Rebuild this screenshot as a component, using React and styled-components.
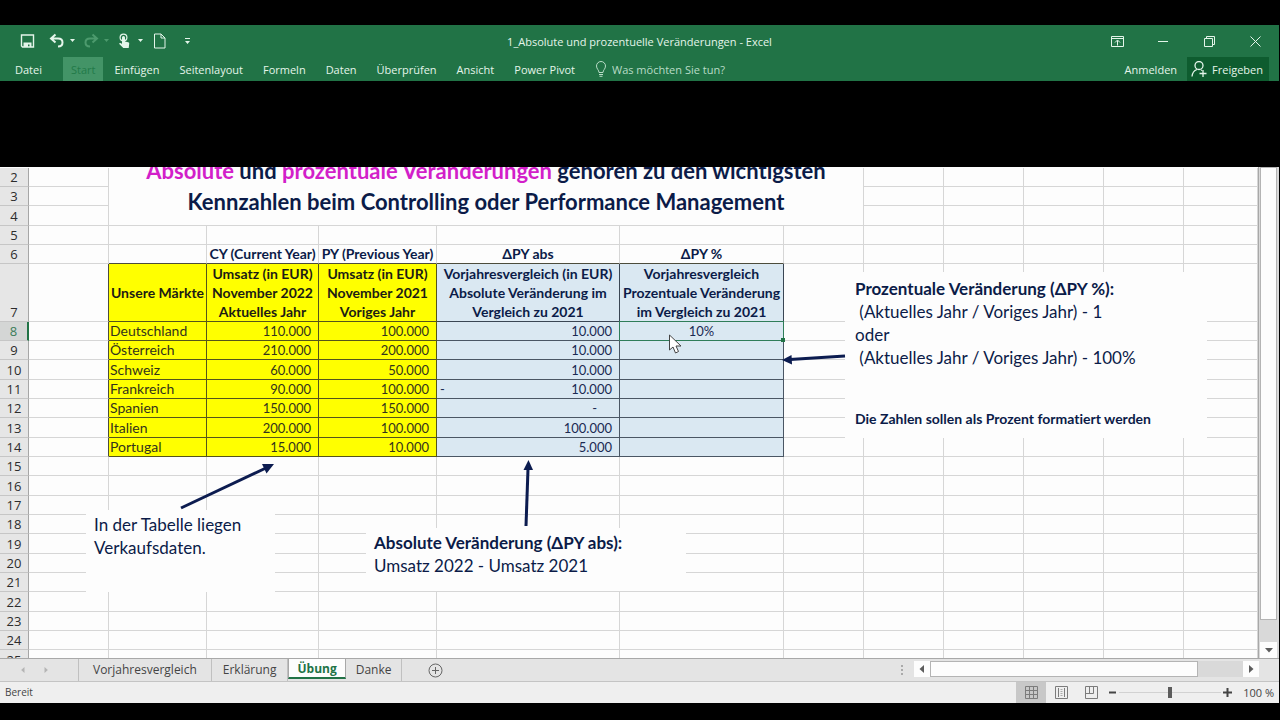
import React, { useState } from 'react';
import styled, { createGlobalStyle, css } from 'styled-components';

const GlobalStyle = createGlobalStyle`
    * {
        box-sizing: border-box;
    }
    body {
        margin: 0;
        background: #000;
        font-family: "Open Sans", "Noto Sans", sans-serif;
        font-size: 11px;
    }
    button, input {
        font: inherit;
        color: inherit;
        border: 0;
        padding: 0;
        background: none;
    }
`

const Window = styled.div`
    display: flex;
    flex-direction: column;
    height: 100vh;
    padding: 25px 1px 17px 0;
    overflow: hidden;
`

const Header = styled.header`
    background: #217346;
    color: #e4f5ea;
`

const TitleBar = styled.div`
    display: grid;
    grid-template-columns: 1fr auto 1fr;
    align-items: center;
    height: 32px;
`

const Title = styled.h1`
    margin: 0;
    font-size: 11px;
    font-weight: 400;
`

const QuickAccess = styled.div`
    display: flex;
    align-items: center;
    gap: 7px;
    padding-left: 20px;
`

const QuickButton = styled.button`
    display: flex;
    align-items: center;
    gap: 4px;
    margin-right: ${props => props.$space || 0}px;
    color: ${props => props.$dim ? '#4c9a6d' : '#e4f5ea'};

    svg {
        display: block;
    }
`

const WindowButtons = styled.div`
    display: flex;
    justify-content: flex-end;
    padding-right: 1px;
`

const WindowButton = styled.button`
    display: grid;
    place-items: center;
    width: 46px;
    height: 30px;
`

const Ribbon = styled.nav`
    display: flex;
    align-items: stretch;
    height: 24px;
    padding-right: 10px;
`

const RibbonTab = styled.button`
    padding: 0 10px;
    white-space: nowrap;
    ${props => props.$file && css`
        padding: 0 21px 0 15px;
    `}
    ${props => props.$active && css`
        padding: 0 8px;
        margin-right: 1px;
        background: #439467;
        color: #227a49;
    `}
`

const Search = styled.label`
    display: flex;
    align-items: center;
    gap: 5px;
    flex: 1;
    margin-left: 10px;
    color: #b9dcc7;

    input {
        flex: 1;
        outline: none;
    }
    input::placeholder {
        color: #b9dcc7;
        opacity: 1;
    }
`

const ShareButton = styled.button`
    display: flex;
    align-items: center;
    gap: 5px;
    padding: 0 6px 0 4px;
    background: #0e5c2f;
`

const RibbonBody = styled.div`
    flex: 0 0 86px;
    background: #000;
`

const Workspace = styled.main`
    display: flex;
    flex: 1;
    min-height: 0;
    background: #e4e4e4;
`

const Sheet = styled.div`
    position: relative;
    flex: 1;
    min-width: 0;
    padding-top: 1px;
    overflow: hidden;
    background: #fdfdfd;
    border-right: 1px solid #a8a8a8;
    font-family: Lato, Carlito, sans-serif;
    font-size: 13px;
    font-variant-ligatures: none;
    color: #0b1b48;
`

const Table = styled.table`
    table-layout: fixed;
    width: 100%;
    border-collapse: separate;
    border-spacing: 0;
`

const Col = styled.col`
    width: ${props => props.$width ? props.$width + 'px' : 'auto'};
`

const Row = styled.tr`
    height: 19px;

    &:nth-child(3n) {
        height: 20px;
    }
`

const cell = css`
    padding: 0;
    border: 0 solid #d6d6d6;
    border-width: 0 1px 1px 0;
    line-height: 18px;
    vertical-align: bottom;
    white-space: nowrap;
`

const RowNumber = styled.th`
    ${cell}
    background: ${props => props.$active ? '#d4d6d5' : '#e6e6e6'};
    border-color: #c6c6c6;
    border-right: ${props => props.$active ? '2px solid #217346' : '1px solid #a6a6a6'};
    color: ${props => props.$active ? '#3c7d5a' : '#2c2c2c'};
    font-family: "Open Sans", "Noto Sans", sans-serif;
    font-size: 13px;
    font-weight: 400;
    text-align: center;
`

const Cell = styled.td`
    ${cell}
    ${props => props.$edgeRight && css`
        border-right-color: #4c4c3c;
    `}
    ${props => props.$edgeBottom && css`
        border-bottom-color: #4c4c3c;
    `}
`

const HeadCell = styled.th`
    ${cell}
    line-height: 19px;
    vertical-align: middle;
    text-align: center;
    font-size: 14px;
    font-weight: 700;
    border-color: ${props => props.$blue ? '#3a4654' : '#55551a'};
    background: ${props => props.$blue ? '#dae8f2' : '#ffff00'};
    color: ${props => props.$blue ? '#0b1b48' : '#1c1c14'};
    white-space: pre-line;
`

const Caption = styled(Cell)`
    text-align: center;
    font-size: 14px;
    font-weight: 700;
`

const DataCell = styled(Cell)`
    position: relative;
    background: ${props => props.$blue ? '#dae8f2' : '#ffff00'};
    border-color: ${props => props.$blue ? '#4a5664' : '#55551a'};
    color: ${props => props.$blue ? '#1b2a52' : '#33331c'};
    text-align: ${props => props.$align || 'right'};
    font-size: ${props => props.$align === 'left' ? '14px' : '13px'};
    padding: ${props => props.$align === 'left' ? '0 0 0 1px' : props.$align === 'center' ? '0' : '0 7px 0 3px'};
`

const Accounting = styled.span`
    display: flex;
    justify-content: space-between;
    padding-right: ${props => props.$zero ? '15px' : '0'};
`

// green frame with fill handle round the active cell
const Selection = styled.span`
    position: absolute;
    z-index: 1;
    inset: -1px;
    border: 1px solid #2f7d59;

    &::after {
        content: '';
        position: absolute;
        right: -2px;
        bottom: -2px;
        width: 4px;
        height: 4px;
        background: #217346;
    }
`

const Banner = styled.h2`
    position: absolute;
    left: 109px;
    top: -12px;
    width: 754px;
    margin: 0;
    padding-bottom: 8px;
    background: #fdfdfd;
    font-size: 22px;
    line-height: 31px;
    font-weight: 700;
    text-align: center;

    em {
        font-style: normal;
        color: #d21fc9;
    }
`

const Note = styled.div`
    position: absolute;
    left: ${props => props.$x}px;
    top: ${props => props.$y}px;
    width: ${props => props.$width}px;
    height: ${props => props.$height}px;
    padding: ${props => props.$pad || '3px 8px'};
    background: #fdfdfd;
    font-size: 17px;
    line-height: 23px;
    white-space: pre-wrap;

    p {
        margin: 0;
    }
`

const Hint = styled.p`
    && {
        margin-top: 38px;
        font-size: 14px;
        font-weight: 700;
    }
`

const Drawing = styled.svg`
    position: absolute;
    z-index: 2;
    left: 0;
    top: 0;
    pointer-events: none;
`

const ScrollColumn = styled.div`
    display: flex;
    flex-direction: column;
    width: 20px;
    padding: 0 2px 0 1px;
    background: #d9d9d9;
`

const ScrollThumb = styled.div`
    background: #fdfdfd;
    border: 1px solid #b4b4b4;
    flex: ${props => props.$flex};
`

const ScrollTrack = styled.div`
    flex: ${props => props.$flex};
    background: #d9d9d9;
`

const ScrollButton = styled.button`
    display: grid;
    place-items: center;
    flex: 0 0 16px;
    background: #fdfdfd;
    color: #5c5c5c;
`

const SheetBar = styled.div`
    display: flex;
    flex: 0 0 24px;
    background: #e4e4e4;
    border-top: 1px solid #a8a8a8;
    border-bottom: 1px solid #c4c4c4;
    color: #444;
    font-size: 12px;
`

const SheetArrows = styled.div`
    display: flex;
    align-items: center;
    gap: 17px;
    width: 79px;
    padding-left: 20px;
    border-right: 1px solid #c0c0c0;
    color: #b4b4b4;

    button {
        display: flex;
    }
`

const SheetTab = styled.button`
    padding: 0 ${props => props.$pad}px 2px;
    border-right: 1px solid #c0c0c0;
    ${props => props.$active && css`
        padding: 0 ${props.$pad}px;
        margin-bottom: 2px;
        background: #fdfdfd;
        border: 1px solid #a8a8a8;
        border-top: 0;
        border-bottom: 2px solid #217346;
        color: #217346;
        font-weight: 700;
    `}
`

const AddSheet = styled.button`
    display: grid;
    place-items: center;
    margin-left: 26px;
`

const Grip = styled.span`
    display: grid;
    align-content: center;
    gap: 2px;
    margin: 0 11px 0 auto;

    i {
        width: 2px;
        height: 2px;
        background: #aaa;
    }
`

const ScrollRow = styled.div`
    display: flex;
    flex: 0 0 345px;
    margin: 2px 20px 4px 0;
`

const StatusBar = styled.footer`
    display: flex;
    align-items: stretch;
    flex: 0 0 21px;
    padding: 0 5px;
    background: #efefef;
    color: #444;
    font-size: 10px;
    line-height: 21px;
`

const ViewButton = styled.button`
    display: grid;
    place-items: center;
    width: 30px;
    background: ${props => props.$active ? '#c8c8c8' : 'none'};
    color: #7c7c7c;
`

const Views = styled.div`
    display: flex;
    margin-left: auto;
`

const Zoom = styled.div`
    display: flex;
    align-items: center;
    gap: 2px;
    margin-left: 2px;

    button {
        display: flex;
    }
    output {
        width: 40px;
        font-size: 11px;
        text-align: right;
        white-space: nowrap;
    }
`

const ZoomSlider = styled.input`
    appearance: none;
    width: 102px;
    height: 12px;
    margin: 0;
    background: linear-gradient(#d2d2d2, #d2d2d2) center / 100% 1px no-repeat;

    &::-webkit-slider-thumb {
        appearance: none;
        width: 4px;
        height: 11px;
        background: #5c5c5c;
    }
`

const columns = [29, 80, 98, 112, 118, 183, 164, 80, 80, 80, 80, 80, null];

const ribbonTabs = ['Datei', 'Start', 'Einfügen', 'Seitenlayout', 'Formeln', 'Daten', 'Überprüfen', 'Ansicht', 'Power Pivot'];

const sheets = [
    { name: 'Vorjahresvergleich', pad: 14 },
    { name: 'Erklärung', pad: 11 },
    { name: 'Übung', pad: 8 },
    { name: 'Danke', pad: 10 }
];

const markets = [
    { name: 'Deutschland', cy: '110.000', py: '100.000', abs: '10.000', pct: '10%' },
    { name: 'Österreich', cy: '210.000', py: '200.000', abs: '10.000' },
    { name: 'Schweiz', cy: '60.000', py: '50.000', abs: '10.000' },
    { name: 'Frankreich', cy: '90.000', py: '100.000', abs: '10.000', negative: true },
    { name: 'Spanien', cy: '150.000', py: '150.000', abs: '-', zero: true },
    { name: 'Italien', cy: '200.000', py: '100.000', abs: '100.000' },
    { name: 'Portugal', cy: '15.000', py: '10.000', abs: '5.000' }
];

const range = (from, to) => Array.from({ length: to - from + 1 }, (_, i) => from + i);

const Caret = () => (
    <svg width="7" height="4" viewBox="0 0 7 4"><path d="M1 0h5L3.500 3z" fill="currentColor" /></svg>
);

const Triangle = ({ turn = 0, size = 8 }) => (
    <svg width={size} height={size} viewBox="0 0 8 8">
        <path d="M0 2h8L4 6.500z" fill="currentColor" transform={`rotate(${turn} 4 4)`} />
    </svg>
);

const SaveIcon = () => (
    <svg width="15" height="16" viewBox="0 0 15 16">
        <path d="M1.500 2h12v12H2.500l-1-1z" fill="none" stroke="currentColor" strokeWidth="1.400" />
        <path d="M3.500 9.500h8V14h-2v-2.500H8V14H3.500z" fill="currentColor" />
    </svg>
);

const UndoIcon = ({ flip }) => (
    <svg width="16" height="16" viewBox="0 0 16 16">
        <g transform={flip ? 'matrix(-1 0 0 1 16 0)' : undefined} fill="none" stroke="currentColor" strokeWidth="2">
            <path d="M6.500 1.500L2 5.500l4.500 4M2.500 5.500H9c3 0 4.500 1.800 4.500 4S12 13.500 9 13.500" />
        </g>
    </svg>
);

const TouchIcon = () => (
    <svg width="16" height="16" viewBox="0 0 16 16">
        <circle cx="6.500" cy="4.500" r="3.400" fill="none" stroke="currentColor" strokeWidth="1.200" />
        <path d="M5 4.500a1.500 1.500 0 0 1 3 0v4l3.200.8c.8.200 1.100.7 1 1.400L11.700 15H6.300L2 10.800c.6-1.200 1.800-1 3 .1z" fill="currentColor" />
    </svg>
);

const PageIcon = () => (
    <svg width="12" height="16" viewBox="0 0 12 16">
        <path d="M.5 1h6.500l4 4v10H.500zM7 1v4h4" fill="none" stroke="currentColor" />
    </svg>
);

const CustomizeIcon = () => (
    <svg width="7" height="7" viewBox="0 0 7 7"><path d="M1 0h5v1H1zM1 3h5L3.500 6z" fill="currentColor" /></svg>
);

const PersonIcon = () => (
    <svg width="16" height="16" viewBox="0 0 16 16" fill="none" stroke="currentColor" strokeWidth="1.300">
        <circle cx="8" cy="4.500" r="4" />
        <path d="M1 15.500c.3-3.500 2-6 5-7M10 9l1 .500M12 9v7M8.500 12.500h7" />
    </svg>
);

const BulbIcon = () => (
    <svg width="12" height="16" viewBox="0 0 12 16" fill="none" stroke="currentColor">
        <path d="M4 11.500C4 9 1.500 8 1.500 5a4.500 4.500 0 0 1 9 0c0 3-2.500 4-2.500 6.500zM4 13.500h4M4.500 15.300h3" />
    </svg>
);

function App() {
    const [tab, setTab] = useState('Start');
    const [sheet, setSheet] = useState('Übung');
    const [zoom, setZoom] = useState(100);

    return (
        <Window>
            <GlobalStyle />
            <Header>
                <TitleBar>
                    <QuickAccess>
                        <QuickButton $space={7} aria-label="Speichern"><SaveIcon /></QuickButton>
                        <QuickButton aria-label="Rückgängig"><UndoIcon /><Caret /></QuickButton>
                        <QuickButton $dim aria-label="Wiederholen"><UndoIcon flip /><Caret /></QuickButton>
                        <QuickButton $space={3} aria-label="Touchmodus"><TouchIcon /><Caret /></QuickButton>
                        <QuickButton $space={11} aria-label="Neu"><PageIcon /></QuickButton>
                        <QuickButton aria-label="Anpassen"><CustomizeIcon /></QuickButton>
                    </QuickAccess>
                    <Title>1_Absolute und prozentuelle Veränderungen - Excel</Title>
                    <WindowButtons>
                        <WindowButton aria-label="Menüband">
                            <svg width="13" height="11" viewBox="0 0 13 11" fill="none" stroke="currentColor">
                                <path d="M.5.500h12v10H.500zM.5 2.500h12M6.500 9.500V4.500M4 6.500l2.500-2.500L9 6.500" />
                            </svg>
                        </WindowButton>
                        <WindowButton aria-label="Minimieren">
                            <svg width="10" height="10" viewBox="0 0 10 10"><path d="M0 5.500h10" stroke="currentColor" /></svg>
                        </WindowButton>
                        <WindowButton aria-label="Wiederherstellen">
                            <svg width="11" height="11" viewBox="0 0 11 11" fill="none" stroke="currentColor">
                                <path d="M.5 2.500h8v8h-8zM2.500 2.500v-2h8v8h-2" />
                            </svg>
                        </WindowButton>
                        <WindowButton aria-label="Schließen">
                            <svg width="11" height="11" viewBox="0 0 11 11"><path d="M.5.500l10 10M10.500.500l-10 10" stroke="currentColor" /></svg>
                        </WindowButton>
                    </WindowButtons>
                </TitleBar>
                <Ribbon>
                    {ribbonTabs.map(name =>
                        <RibbonTab key={name} $file={name === 'Datei'} $active={name === tab} onClick={() => setTab(name)}>
                            {name}
                        </RibbonTab>
                    )}
                    <Search>
                        <BulbIcon />
                        <input type="text" placeholder="Was möchten Sie tun?" aria-label="Was möchten Sie tun?" />
                    </Search>
                    <RibbonTab>Anmelden</RibbonTab>
                    <ShareButton><PersonIcon />Freigeben</ShareButton>
                </Ribbon>
            </Header>
            <RibbonBody />

            <Workspace>
                <Sheet>
                    <Table>
                        <colgroup>
                            {columns.map((width, i) => <Col key={i} $width={width} />)}
                        </colgroup>
                        <tbody>
                            {range(2, 5).map(n => <EmptyRow key={n} n={n} />)}
                            <Row>
                                <RowNumber scope="row">6</RowNumber>
                                <Cell />
                                <Cell $edgeBottom />
                                <Caption $edgeBottom>CY (Current Year)</Caption>
                                <Caption $edgeBottom>PY (Previous Year)</Caption>
                                <Caption $edgeBottom>ΔPY abs</Caption>
                                <Caption $edgeBottom>ΔPY %</Caption>
                                {range(7, 12).map(i => <Cell key={i} />)}
                            </Row>
                            <Row>
                                <RowNumber scope="row">7</RowNumber>
                                <Cell $edgeRight />
                                <HeadCell scope="col">Unsere Märkte</HeadCell>
                                <HeadCell scope="col">{'Umsatz (in EUR)\nNovember 2022\nAktuelles Jahr'}</HeadCell>
                                <HeadCell scope="col">{'Umsatz (in EUR)\nNovember 2021\nVoriges Jahr'}</HeadCell>
                                <HeadCell scope="col" $blue>{'Vorjahresvergleich (in EUR)\nAbsolute Veränderung im\nVergleich zu 2021'}</HeadCell>
                                <HeadCell scope="col" $blue>{'Vorjahresvergleich\nProzentuale Veränderung\nim Vergleich zu 2021'}</HeadCell>
                                {range(7, 12).map(i => <Cell key={i} />)}
                            </Row>
                            {markets.map((market, i) =>
                                <Row key={market.name}>
                                    <RowNumber scope="row" $active={i === 0}>{i + 8}</RowNumber>
                                    <Cell $edgeRight />
                                    <DataCell $align="left">{market.name}</DataCell>
                                    <DataCell>{market.cy}</DataCell>
                                    <DataCell>{market.py}</DataCell>
                                    <DataCell $blue>
                                        <Accounting $zero={market.zero}>
                                            <span>{market.negative ? '-' : ''}</span>
                                            <span>{market.abs}</span>
                                        </Accounting>
                                    </DataCell>
                                    <DataCell $blue $align="center">
                                        {market.pct}
                                        {market.pct && <Selection />}
                                    </DataCell>
                                    {range(7, 12).map(c => <Cell key={c} />)}
                                </Row>
                            )}
                            {range(15, 25).map(n => <EmptyRow key={n} n={n} />)}
                        </tbody>
                    </Table>

                    <Banner>
                        <em>Absolute</em> und <em>prozentuale Veränderungen</em> gehören zu den wichtigsten<br />
                        Kennzahlen beim Controlling oder Performance Management
                    </Banner>
                    <Note $x={86} $y={343} $width={189} $height={82}>
                        <p>In der Tabelle liegen</p>
                        <p>Verkaufsdaten.</p>
                    </Note>
                    <Note $x={366} $y={361} $width={320} $height={63}>
                        <p><b>Absolute Veränderung (ΔPY abs):</b></p>
                        <p>Umsatz 2022 - Umsatz 2021</p>
                    </Note>
                    <Note $x={845} $y={105} $width={362} $height={166} $pad="5px 10px">
                        <p><b>Prozentuale Veränderung (ΔPY %):</b></p>
                        <p> (Aktuelles Jahr / Voriges Jahr) - 1</p>
                        <p>oder</p>
                        <p> (Aktuelles Jahr / Voriges Jahr) - 100%</p>
                        <Hint>Die Zahlen sollen als Prozent formatiert werden</Hint>
                    </Note>
                    <Drawing width="900" height="400" viewBox="0 0 900 400">
                        <g stroke="#0c1c50" strokeWidth="3" fill="#0c1c50">
                            <path d="M181 341L266 301" />
                            <path d="M274 297l-7.500 9.500-4.500-9.500z" strokeWidth="0" />
                            <path d="M526 359L528 302" />
                            <path d="M528.500 293l4.500 10h-9.500z" strokeWidth="0" />
                            <path d="M845 189L790 192.500" />
                            <path d="M782 193l9.500-5 .500 9.500z" strokeWidth="0" />
                        </g>
                        <path d="M669.500 168v15l3.500-3 2.500 6 3-1.500-2.500-5.500h5z" fill="#fff" stroke="#444" />
                    </Drawing>
                </Sheet>
                <ScrollColumn>
                    <ScrollThumb $flex="455" />
                    <ScrollTrack $flex="22" />
                    <ScrollButton aria-label="Nach unten"><Triangle /></ScrollButton>
                </ScrollColumn>
            </Workspace>

            <SheetBar>
                <SheetArrows>
                    <button aria-label="Vorheriges Blatt"><Triangle turn={90} size={6} /></button>
                    <button aria-label="Nächstes Blatt"><Triangle turn={-90} size={6} /></button>
                </SheetArrows>
                {sheets.map(({ name, pad }) =>
                    <SheetTab key={name} $pad={pad} $active={name === sheet} onClick={() => setSheet(name)}>
                        {name}
                    </SheetTab>
                )}
                <AddSheet aria-label="Neues Blatt">
                    <svg width="15" height="15" viewBox="0 0 15 15" fill="none" stroke="#666">
                        <circle cx="7.500" cy="7.500" r="6.500" />
                        <path d="M7.500 4v7M4 7.500h7" />
                    </svg>
                </AddSheet>
                <Grip><i /><i /><i /></Grip>
                <ScrollRow>
                    <ScrollButton aria-label="Nach links"><Triangle turn={90} /></ScrollButton>
                    <ScrollThumb $flex="268" />
                    <ScrollTrack $flex="45" />
                    <ScrollButton aria-label="Nach rechts"><Triangle turn={-90} /></ScrollButton>
                </ScrollRow>
            </SheetBar>
            <StatusBar>
                <span>Bereit</span>
                <Views>
                    <ViewButton $active aria-label="Normal">
                        <svg width="13" height="13" viewBox="0 0 13 13" fill="none" stroke="currentColor">
                            <path d="M.5.500h12v12H.500zM4.500.500v12M8.500.500v12M.5 4.500h12M.5 8.500h12" />
                        </svg>
                    </ViewButton>
                    <ViewButton aria-label="Seitenlayout">
                        <svg width="13" height="13" viewBox="0 0 13 13" fill="none" stroke="currentColor">
                            <path d="M.5.500h12v12H.500z" />
                            <path d="M3.500 2v9M9.500 2v9" />
                            <path d="M5.500 3.500h2M5.500 5.500h2M5.500 7.500h2M5.500 9.500h2" strokeWidth="0.600" />
                        </svg>
                    </ViewButton>
                    <ViewButton aria-label="Umbruchvorschau">
                        <svg width="13" height="13" viewBox="0 0 13 13" fill="none" stroke="currentColor">
                            <path d="M.5.500h12v12H.500zM4.500.500v7M8.500.500v7M.5 7.500h8" />
                        </svg>
                    </ViewButton>
                </Views>
                <Zoom>
                    <button aria-label="Verkleinern" onClick={() => setZoom(zoom - 10)}>
                        <svg width="9" height="9" viewBox="0 0 9 9"><path d="M1 4.500h7" stroke="currentColor" strokeWidth="2" /></svg>
                    </button>
                    <ZoomSlider type="range" min="0" max="200" value={zoom} aria-label="Zoom" onChange={e => setZoom(Number(e.target.value))} />
                    <button aria-label="Vergrößern" onClick={() => setZoom(zoom + 10)}>
                        <svg width="9" height="9" viewBox="0 0 9 9"><path d="M0 4.500h9M4.500 0v9" stroke="currentColor" strokeWidth="2" /></svg>
                    </button>
                    <output>{zoom} %</output>
                </Zoom>
            </StatusBar>
        </Window>
    );
}

function EmptyRow({ n }) {
    return (
        <Row>
            <RowNumber scope="row">{n}</RowNumber>
            {range(1, 12).map(i => <Cell key={i} />)}
        </Row>
    );
}

export default App;
